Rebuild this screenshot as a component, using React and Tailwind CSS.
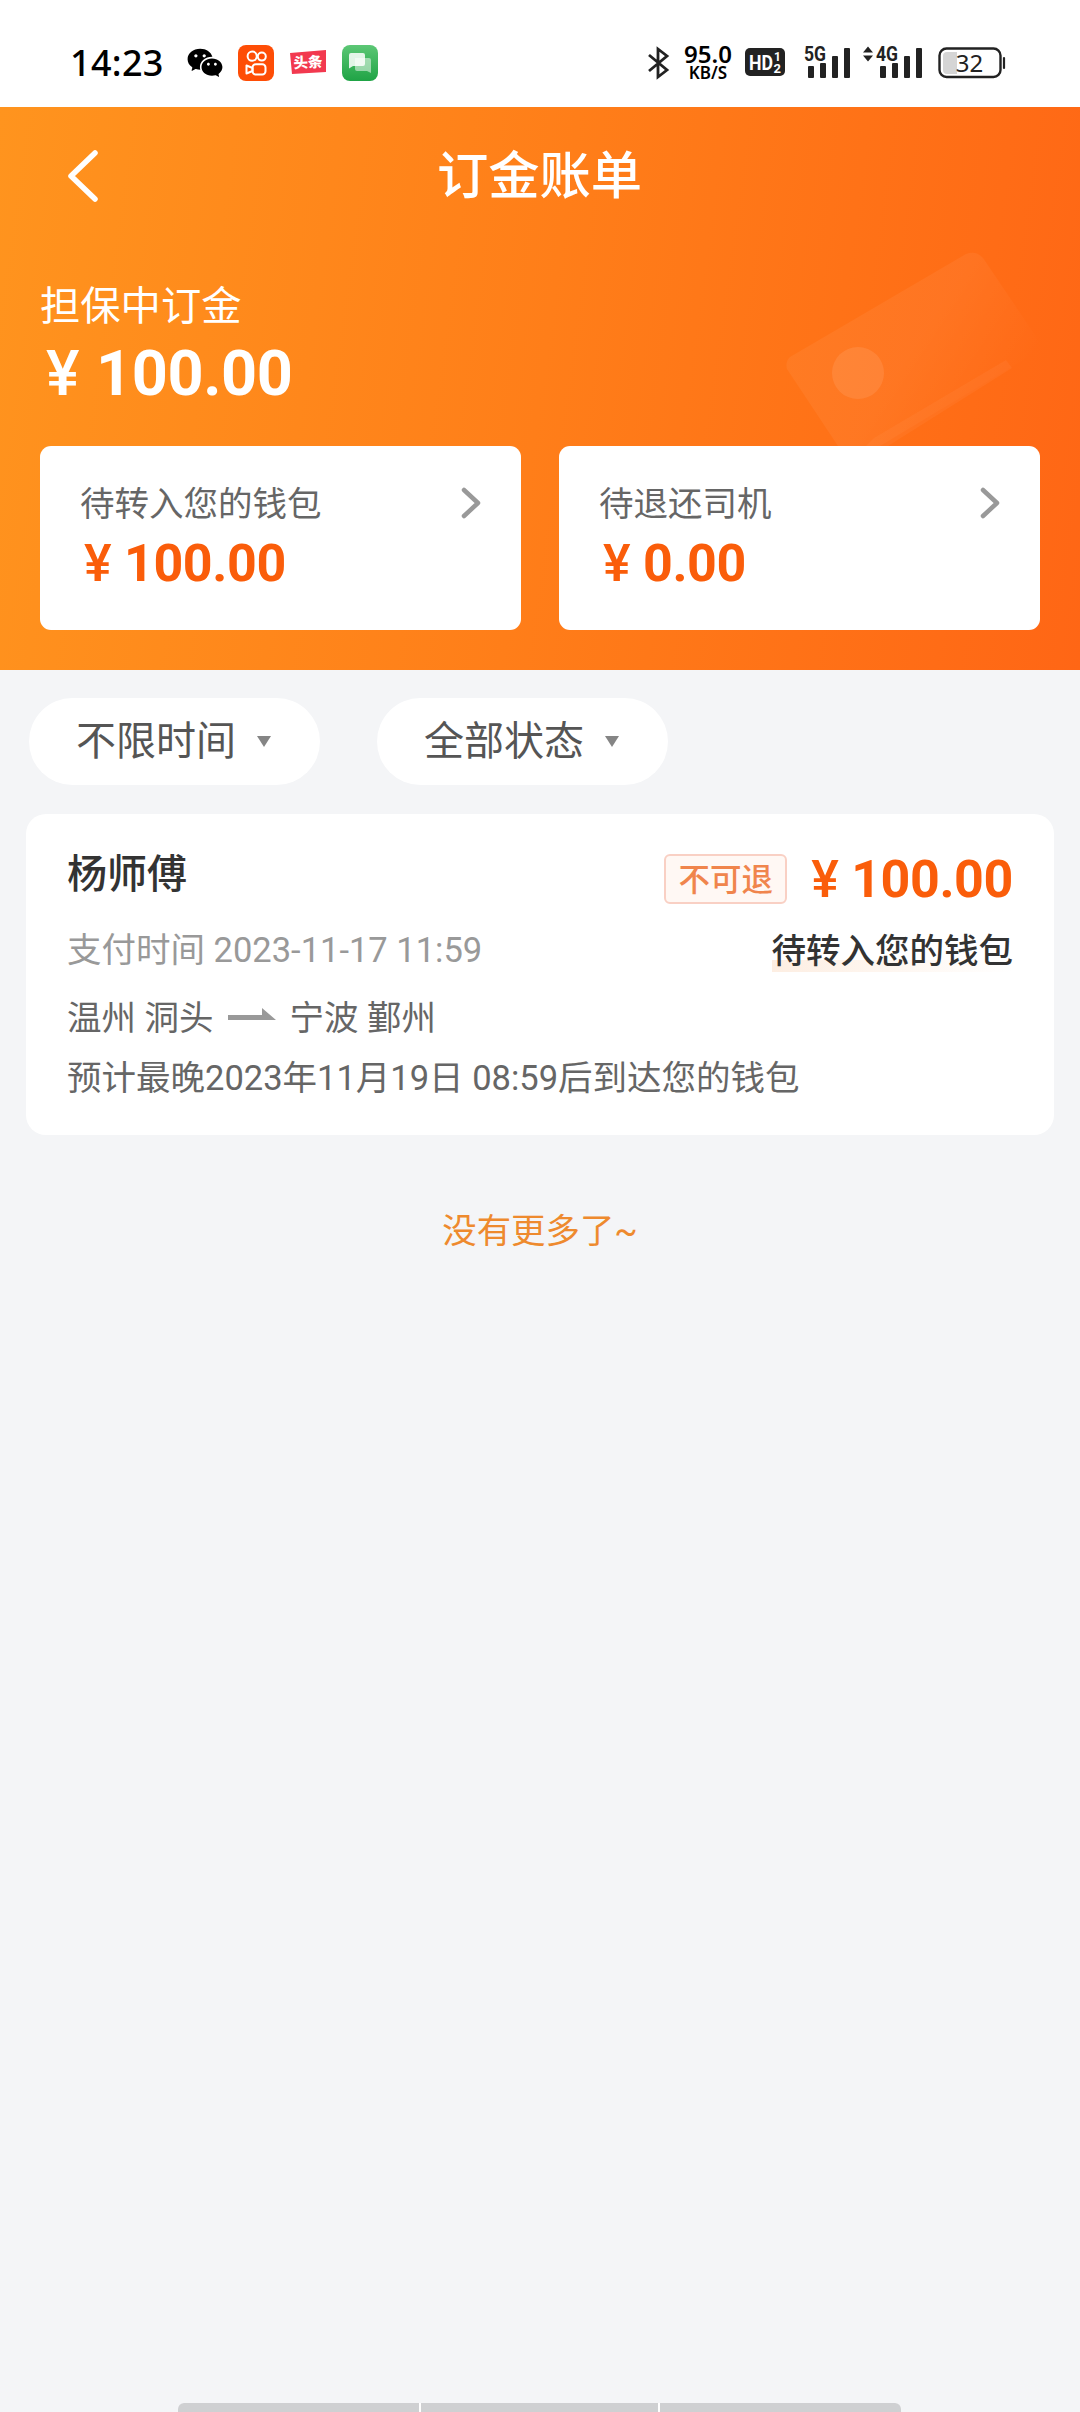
import React from 'react';
import { RiWechatFill } from 'react-icons/ri';

const wallets = [
  { label: '待转入您的钱包', amount: '100.00' },
  { label: '待退还司机', amount: '0.00' },
];

const filters = ['不限时间', '全部状态'];

const KuaishouIcon = () => (
  <svg width="36" height="36" viewBox="0 0 36 36" fill="none" className="ml-[14px]">
    <rect width="36" height="36" rx="8" fill="#fe4d06" />
    <g stroke="#fff" strokeWidth="2">
      <circle cx="14.200" cy="11.2" r="4.6" />
      <circle cx="23.8" cy="11.6" r="4" />
      <rect x="14.5" y="19.3" width="13" height="10.2" rx="3.2" />
      <path d="M14.500 23l-6-2.500v8l6-2.500z" strokeLinejoin="round" />
    </g>
  </svg>
);

const ToutiaoIcon = () => (
  <svg width="36" height="26" viewBox="0 0 36 26" className="ml-4">
    <path d="M0 3l36-3v22L2 24z" fill="#f2394f" />
    <text x="3.500" y="17.500" fontSize="14.500" fontWeight="900" fill="#fff" fontFamily="Noto Sans CJK SC, sans-serif" transform="rotate(-3 18 13)">
      头条
    </text>
  </svg>
);

const MessageIcon = () => (
  <svg width="36" height="36" viewBox="0 0 36 36" className="ml-4">
    <defs>
      <linearGradient id="msg" x1="0" y1="0" x2="0" y2="1">
        <stop offset="0" stopColor="#5cc775" />
        <stop offset="1" stopColor="#1fa345" />
      </linearGradient>
    </defs>
    <rect width="36" height="36" rx="8" fill="url(#msg)" />
    <path d="M13 13h14q2 0 2 2v13l-4-2H15q-2 0-2-2z" fill="#fff" fillOpacity=".5" />
    <path d="M9 8h12q2 0 2 2v9q0 2-2 2H11l-4 2.500V10q0-2 2-2z" fill="#fff" fillOpacity=".85" />
  </svg>
);

const BluetoothIcon = () => (
  <svg width="22" height="34" viewBox="0 0 22 34" fill="none" stroke="#222" strokeWidth="2.800" className="ml-[270px]">
    <path d="M1 9l18 15-9 7V3l9 7L1 25" />
  </svg>
);

const SignalIcon = ({ label, arrows, className }) => (
  <svg width={arrows ? 60 : 47} height="46" viewBox={arrows ? '-13 -6 60 46' : '0 -6 47 46'} fill="#222" className={className}>
    <text x="0" y="14.500" fontSize="19.500" fontWeight="700" fontFamily="Roboto, sans-serif" textLength="22" lengthAdjust="spacingAndGlyphs">
      {label}
    </text>
    <rect x="4" y="20" width="6" height="12" rx="1" />
    <rect x="16" y="17" width="6" height="15" rx="1" />
    <rect x="28" y="10" width="6" height="22" rx="1" />
    <rect x="40" y="2" width="6" height="30" rx="1" />
    {arrows && <path d="M-13 6.500l5-6 5 6zM-13 9.500l5 6 5-6z" />}
  </svg>
);

const BatteryIcon = () => (
  <svg width="68" height="32" viewBox="0 0 68 32" className="ml-[15px]">
    <path d="M9 5h10v22H9q-4 0-4-4V9q0-4 4-4z" fill="#d5d5d5" />
    <rect x="1.500" y="1.500" width="61" height="28.500" rx="7" fill="none" stroke="#222" strokeWidth="2.400" />
    <path d="M66 11v10" stroke="#222" strokeWidth="2.200" strokeLinecap="round" />
    <text x="31.500" y="24.500" textAnchor="middle" fontSize="24" fill="#222" fontFamily="Noto Sans, sans-serif">
      32
    </text>
  </svg>
);

const StatusBar = () => (
  <div className="flex h-[107px] items-center bg-white pt-[18px] pl-[70px] text-black">
    <div className="flex h-[50px] items-center">
      <span className="w-[94px] font-['Noto_Sans'] text-[36px] leading-none font-medium tracking-[0.3px]">14:23</span>
      <RiWechatFill size={38} className="ml-[22px]" />
      <KuaishouIcon />
      <ToutiaoIcon />
      <MessageIcon />
      <BluetoothIcon />
      <div className="ml-[12px] flex w-[52px] flex-col items-center font-['Noto_Sans'] font-semibold">
        <span className="text-[24px] leading-[20px]">95.0</span>
        <span className="text-[17px] leading-[17px]">KB/S</span>
      </div>
      <svg width="41" height="29" viewBox="0 0 41 29" className="ml-[11px]" fontFamily="Roboto, sans-serif" fontWeight="700" fill="#fff">
        <rect width="40" height="28" rx="5" fill="#222" />
        <text x="4" y="21.500" fontSize="21" textLength="24" lengthAdjust="spacingAndGlyphs">HD</text>
        <text x="29" y="13" fontSize="12">1</text>
        <text x="28.500" y="25" fontSize="13">2</text>
      </svg>
      <SignalIcon label="5G" className="ml-[18px]" />
      <SignalIcon label="4G" arrows className="ml-[12px]" />
      <BatteryIcon />
    </div>
  </div>
);

const Price = ({ amount, className, yenClass }) => (
  <div className={`flex items-baseline font-[Roboto] leading-none font-bold ${className}`}>
    <span className={`font-medium ${yenClass}`}>¥</span>
    <span className="tracking-[-0.4px]">{amount}</span>
  </div>
);

const CardArt = () => (
  <svg width="290" height="206" viewBox="0 0 290 206" className="absolute top-[133px] right-[20px]" fill="#fff">
    <defs>
      <linearGradient id="art" x1="0" y1="0" x2="1" y2="0.500">
        <stop offset="0" stopColor="#fff" stopOpacity=".05" />
        <stop offset="0.600" stopColor="#fff" stopOpacity=".05" />
        <stop offset="1" stopColor="#fff" stopOpacity="0" />
      </linearGradient>
    </defs>
    <path d="M20 117L196 14q10-4 17 4l54 80q6 10-4 16L110 206H68L17 129q-2-7 3-12z" fill="url(#art)" />
    <path d="M104 198L236 120l6 8-124 78H96z" fillOpacity=".04" />
    <circle cx="88" cy="133" r="26" fillOpacity=".09" />
  </svg>
);

const Header = () => (
  <header className="relative h-[563px] bg-linear-[98deg] from-[#ff941e] via-[#ff7e19] to-[#ff6615] px-10 text-white">
    <CardArt />
    <div className="relative flex h-[139px] items-center justify-center">
      <svg width="34" height="56" viewBox="0 0 34 56" fill="none" stroke="#fff" strokeWidth="5.500" strokeLinecap="round" strokeLinejoin="round" className="absolute top-[41px] left-[26px]">
        <path d="M29 5L5 28l24 23" />
      </svg>
      <h1 className="-ml-px pt-px text-[51.3px] leading-none font-medium">订金账单</h1>
    </div>
    <div className="relative pt-[39px]">
      <p className="text-[40.3px] leading-[44px]">担保中订金</p>
      <Price amount="100.00" className="mt-[13px] h-[66px] pl-[6px] text-[63px]" yenClass="w-[50px]" />
    </div>
    <div className="relative mt-[38px] grid grid-cols-2 gap-[38px]">
      {wallets.map((w) => (
        <div key={w.label} className="h-[184px] rounded-[11px] bg-white px-10 pt-[36px]">
          <div className="flex h-[44px] items-center justify-between text-[#666]">
            <span className="text-[34.5px] leading-none">{w.label}</span>
            <svg width="22" height="34" viewBox="0 0 22 34" fill="none" stroke="#999" strokeWidth="4.500" strokeLinecap="round" strokeLinejoin="round" className="-mt-[2px] -mr-px">
              <path d="M4 4l14 13L4 30" />
            </svg>
          </div>
          <Price amount={w.amount} className="mt-[12px] pl-[2px] text-[52px] text-[#fa5d0a]" yenClass="w-[42px] pl-[2px]" />
        </div>
      ))}
    </div>
  </header>
);

const OrderCard = () => (
  <section className="mx-[26px] mt-[29px] h-[321px] rounded-[20px] bg-white px-[41px] pt-[32px] text-[34.5px] text-[#666]">
    <div className="flex h-[66px] items-center justify-between">
      <h2 className="-mt-[8px] text-[40px] leading-none font-medium text-[#333]">杨师傅</h2>
      <div className="flex items-center">
        <span className="flex h-[50px] w-[123px] items-center justify-center rounded-[6px] border-2 border-[#f9d0c4] bg-[#fff8f4] pt-[3px] text-[31.5px] leading-none font-medium text-[#f0854c]">
          不可退
        </span>
        <Price amount="100.00" className="ml-[21px] pt-px text-[52px] text-[#fa5d0a]" yenClass="w-[43px] pl-[3px]" />
      </div>
    </div>
    <div className="mt-[15px] flex h-[46px] items-center justify-between leading-none">
      <span className="text-[#999]">支付时间 2023-11-17 11:59</span>
      <span className="mt-[6px] bg-linear-to-r from-[#fdeee2] to-white bg-[length:100%_12px] bg-bottom bg-no-repeat pb-[3px] font-medium text-[#333]">待转入您的钱包</span>
    </div>
    <div className="mt-[22px] flex h-[46px] items-center leading-none">
      <span>温州 洞头</span>
      <svg width="48" height="13" viewBox="0 0 48 13" fill="#999" className="mx-[14px] -mt-[8px]">
        <path d="M0 7h34V0l14 12H0z" />
      </svg>
      <span>宁波 鄞州</span>
    </div>
    <p className="mt-[14px] h-[46px] leading-[46px]">预计最晚2023年11月19日 08:59后到达您的钱包</p>
  </section>
);

const App = () => {
  return (
    <div className="flex h-[2412px] w-[1080px] flex-col overflow-hidden bg-[#f4f5f7] font-[Roboto,'Noto_Sans_CJK_SC',sans-serif]">
      <StatusBar />
      <Header />

      {/* Filters */}
      <div className="mt-7 flex gap-[57px] pl-[29px]">
        {filters.map((f) => (
          <button key={f} className="flex h-[87px] w-[291px] items-center rounded-full bg-white pt-px pl-[47px] text-[40px] leading-none text-[#555]">
            {f}
            <svg width="14" height="11" viewBox="0 0 14 11" fill="#858585" className="-mt-px ml-[21px]">
              <path d="M0 0h14L7 11z" />
            </svg>
          </button>
        ))}
      </div>

      <OrderCard />
      <p className="mt-[73px] text-center text-[34.4px] leading-[46px] text-[#ee8a2e]">没有更多了~</p>

      {/* Gesture bar */}
      <div className="mt-auto ml-[178px] flex h-[9px] w-[723px] gap-[2px] overflow-hidden rounded-t-[6px] bg-white">
        <div className="w-[241px] bg-[#cfd0d2]" />
        <div className="w-[237px] bg-[#cfd0d2]" />
        <div className="flex-1 bg-[#cfd0d2]" />
      </div>
    </div>
  );
};

export default App;
